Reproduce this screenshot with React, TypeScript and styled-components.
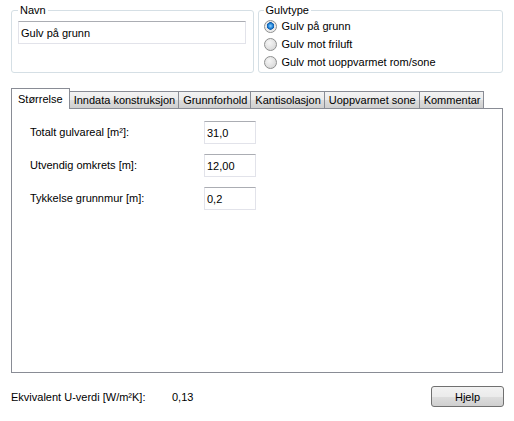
import React, { useState } from "react";
import styled, { createGlobalStyle } from "styled-components";

const GlobalStyle = createGlobalStyle`
  html, body {
    margin: 0;
    background: #ffffff;
  }
  body {
    font-family: "Liberation Sans", Arial, sans-serif;
    font-size: 11px;
    color: #000000;
  }
`;

const tabs = ["Størrelse", "Inndata konstruksjon", "Grunnforhold", "Kantisolasjon", "Uoppvarmet sone", "Kommentar"];
const floorTypes = ["Gulv på grunn", "Gulv mot friluft", "Gulv mot uoppvarmet rom/sone"];
const fields = [
  { label: "Totalt gulvareal [m²]:", value: "31,0" },
  { label: "Utvendig omkrets [m]:", value: "12,00" },
  { label: "Tykkelse grunnmur [m]:", value: "0,2" },
];

export default function App() {
  const [activeTab, setActiveTab] = useState(0);
  const [floorType, setFloorType] = useState(0);

  return (
    <>
      <GlobalStyle />
      <Page>
        <TopRow>
          <Group $width={243}>
            <Legend>Navn</Legend>
            <NameInput defaultValue="Gulv på grunn" />
          </Group>
          <Group $width={246} $padLeft={5}>
            <Legend>Gulvtype</Legend>
            {floorTypes.map((t, i) => (
              <RadioRow key={t} onClick={() => setFloorType(i)}>
                <RadioDot $checked={floorType === i} />
                {t}
              </RadioRow>
            ))}
          </Group>
        </TopRow>

        <TabStrip>
          {tabs.map((t, i) => (
            <Tab key={t} $active={activeTab === i} onClick={() => setActiveTab(i)}>
              {t}
            </Tab>
          ))}
        </TabStrip>
        <Panel>
          <FieldGrid>
            {fields.map(f => (
              <React.Fragment key={f.label}>
                <FieldLabel>{f.label}</FieldLabel>
                <ValueInput defaultValue={f.value} />
              </React.Fragment>
            ))}
          </FieldGrid>
        </Panel>

        <BottomRow>
          <ResultLabel>Ekvivalent U-verdi [W/m²K]:</ResultLabel>
          <ResultValue>0,13</ResultValue>
          <HelpButton>Hjelp</HelpButton>
        </BottomRow>
      </Page>
    </>
  );
}

const Page = styled.div`
  width: 492px;
  padding: 4px 11px 0 11px;
`;

const TopRow = styled.div`
  display: flex;
  gap: 4px;
  align-items: stretch;
`;

const Group = styled.fieldset<{ $width: number; $padLeft?: number }>`
  width: ${p => p.$width}px;
  box-sizing: border-box;
  margin: 0;
  padding: 0 ${p => p.$padLeft ?? 6}px 1px ${p => p.$padLeft ?? 6}px;
  border: 1px solid #d5dfe5;
  border-radius: 3px;
  min-width: 0;
`;

const Legend = styled.legend`
  padding: 0 2px;
  line-height: 13px;
  font-size: 11px;
`;

const NameInput = styled.input`
  display: block;
  box-sizing: border-box;
  width: 228px;
  height: 23px;
  margin-top: 4px;
  padding: 0 2px;
  font-family: inherit;
  font-size: 11px;
  color: #000;
  border: 1px solid #e2e3ea;
  border-top-color: #abadb3;
  outline: none;
`;

const RadioRow = styled.label`
  display: flex;
  align-items: center;
  gap: 5px;
  height: 18px;
  cursor: default;
`;

const RadioDot = styled.span<{ $checked: boolean }>`
  width: 13px;
  height: 13px;
  box-sizing: border-box;
  border-radius: 50%;
  border: 1px solid #8e8f8f;
  background: ${p =>
    p.$checked
      ? "radial-gradient(circle at 50% 45%, #8fd3ff 0, #1d7ed4 2.5px, #0f5aa8 3.5px, #e9e9e9 4px, #f4f4f4 100%)"
      : "radial-gradient(circle at 40% 35%, #f6f6f6 0, #dcdcdc 70%, #cfcfcf 100%)"};
  flex: none;
`;

const TabStrip = styled.div`
  display: flex;
  align-items: flex-end;
  margin-top: 15px;
  height: 20px;
  position: relative;
  z-index: 1;
`;

const Tab = styled.div<{ $active: boolean }>`
  box-sizing: border-box;
  height: ${p => (p.$active ? 21 : 17)}px;
  margin-bottom: ${p => (p.$active ? -1 : 0)}px;
  margin-left: -1px;
  &:first-child {
    margin-left: 0;
  }
  padding: ${p => (p.$active ? "0 6px" : "0 3px 0 4px")};
  display: flex;
  align-items: center;
  border: 1px solid #898c95;
  border-bottom: none;
  background: ${p => (p.$active ? "#ffffff" : "linear-gradient(#f3f3f3, #ebebeb 50%, #dddddd 51%, #cfcfcf)")};
  position: relative;
  z-index: ${p => (p.$active ? 2 : 1)};
  white-space: nowrap;
  cursor: default;
`;

const Panel = styled.div`
  box-sizing: border-box;
  height: 265px;
  border: 1px solid #898c95;
  background: #ffffff;
  padding: 12px 18px;
`;

const FieldGrid = styled.div`
  display: grid;
  grid-template-columns: 174px 52px;
  row-gap: 10px;
  align-items: center;
`;

const FieldLabel = styled.span`
  line-height: 13px;
`;

const ValueInput = styled.input`
  box-sizing: border-box;
  width: 52px;
  height: 23px;
  padding: 0 2px;
  font-family: inherit;
  font-size: 11px;
  color: #000;
  border: 1px solid #e2e3ea;
  border-top-color: #abadb3;
  outline: none;
`;

const BottomRow = styled.div`
  display: flex;
  align-items: center;
  margin-top: 13px;
`;

const ResultLabel = styled.span`
  width: 161px;
`;

const ResultValue = styled.span`
  flex: 1;
`;

const HelpButton = styled.button`
  box-sizing: border-box;
  width: 73px;
  height: 21px;
  font-family: inherit;
  font-size: 11px;
  color: #000;
  border: 1px solid #707070;
  border-radius: 3px;
  background: linear-gradient(#f2f2f2, #ebebeb 50%, #dddddd 51%, #cfcfcf);
  padding: 0;
  margin-right: -1px;
`;
